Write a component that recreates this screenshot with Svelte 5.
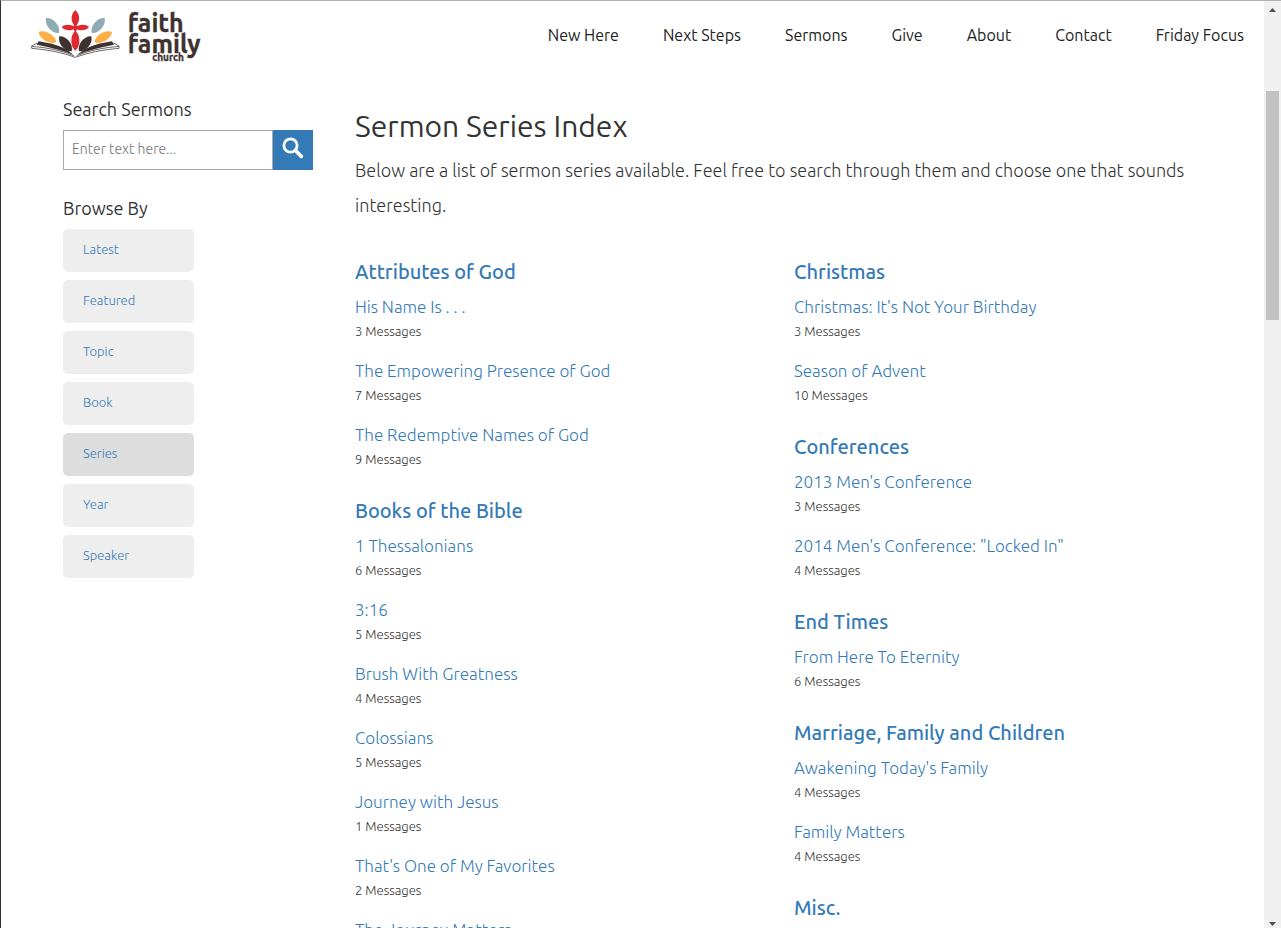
<script>
  const nav = ['New Here', 'Next Steps', 'Sermons', 'Give', 'About', 'Contact', 'Friday Focus'];
  const filters = ['Latest', 'Featured', 'Topic', 'Book', 'Series', 'Year', 'Speaker'];
  const current = 'Series';

  // A pointed petal between two tips; w is how far the sides bulge.
  function petal(x1, y1, x2, y2, w) {
    const dx = x2 - x1;
    const dy = y2 - y1;
    const len = Math.hypot(dx, dy);
    const nx = (-dy / len) * w;
    const ny = (dx / len) * w;
    const at = (t, s) => `${(x1 + dx * t + nx * s).toFixed(1)} ${(y1 + dy * t + ny * s).toFixed(1)}`;
    return `M${x1} ${y1} C${at(0.22, 1)} ${at(0.78, 1)} ${x2} ${y2} C${at(0.78, -1)} ${at(0.22, -1)} ${x1} ${y1}Z`;
  }

  const petals = [
    ['#8fabb3', petal(78, 54, 117, 99, 18)],
    ['#8fabb3', petal(254, 54, 215, 99, 18)],
    ['#fbaf46', petal(56, 96, 109, 127, 17)],
    ['#fbaf46', petal(276, 96, 223, 127, 17)],
    ['#3d3230', petal(118, 109, 155, 154, 18)],
    ['#3d3230', petal(214, 109, 177, 154, 18)],
    ['#e0282e', petal(166, 31, 166, 79, 15)],
    ['#e0282e', petal(166, 92, 166, 152, 16)],
    ['#e0282e', petal(125, 81, 166, 84, 11)],
    ['#e0282e', petal(207, 81, 166, 84, 11)]
  ];

  const columns = [
    [
      {
        title: 'Attributes of God',
        series: [['His Name Is . . .', 3], ['The Empowering Presence of God', 7], ['The Redemptive Names of God', 9]]
      },
      {
        title: 'Books of the Bible',
        series: [
          ['1 Thessalonians', 6],
          ['3:16', 5],
          ['Brush With Greatness', 4],
          ['Colossians', 5],
          ['Journey with Jesus', 1],
          ["That's One of My Favorites", 2],
          ['The Journey Matters']
        ]
      }
    ],
    [
      { title: 'Christmas', series: [["Christmas: It's Not Your Birthday", 3], ['Season of Advent', 10]] },
      { title: 'Conferences', series: [["2013 Men's Conference", 3], ['2014 Men\'s Conference: "Locked In"', 4]] },
      { title: 'End Times', series: [['From Here To Eternity', 6]] },
      { title: 'Marriage, Family and Children', series: [["Awakening Today's Family", 4], ['Family Matters', 4]] },
      { title: 'Misc.', series: [] }
    ]
  ];
</script>

<div class="window">
  <div class="page">
    <header>
      <a class="logo" href="#home" aria-label="Faith Family Church">
        <svg width="174" height="53" viewBox="30 30 522 159" aria-hidden="true">
          <g fill="#3d3230">
            <path d="M56 124 L96 131 Q136 142 160 164 Q118 147 50 134Z" />
            <path d="M276 124 L236 131 Q196 142 172 164 Q214 147 282 134Z" />
          </g>
          <path
            d="M52 129 L35 138 V145 Q110 151 166 172 Q222 151 297 145 V138 L280 129 M35 139 Q110 145 162 167 M297 139 Q222 145 170 167"
            fill="none"
            stroke="#3d3230"
            stroke-width="2.2"
          />
          {#each petals as [fill, d]}
            <path {fill} {d} />
          {/each}
          <path d="M166 68 L173 83 L166 100 L159 83Z" fill="#e0282e" />
          <g class="wordmark">
            <text x="323" y="97" font-size="75">faith</text>
            <text x="323" y="158" font-size="75">family</text>
            <text x="397" y="183" font-size="30">church</text>
          </g>
        </svg>
      </a>
      <nav aria-label="Main">
        {#each nav as item}
          <a href="#{item.toLowerCase().replace(' ', '-')}">{item}</a>
        {/each}
      </nav>
    </header>

    <div class="body">
      <aside>
        <form class="search" onsubmit={(e) => e.preventDefault()}>
          <label for="q">Search Sermons</label>
          <div class="field">
            <input id="q" type="text" placeholder="Enter text here..." />
            <button type="submit" aria-label="Search">
              <svg width="22" height="22" viewBox="0 0 22 22" fill="none" stroke="#fff" aria-hidden="true">
                <circle cx="8.5" cy="8.5" r="6.6" stroke-width="2.8" />
                <path d="M13.5 13.5 L19.3 19.3" stroke-width="3.8" stroke-linecap="round" />
              </svg>
            </button>
          </div>
        </form>
        <h2>Browse By</h2>
        <ul class="filters">
          {#each filters as f}
            <li><a href="#{f.toLowerCase()}" class:active={f === current}>{f}</a></li>
          {/each}
        </ul>
      </aside>

      <main>
        <h1>Sermon Series Index</h1>
        <p class="intro">
          Below are a list of sermon series available. Feel free to search through them and choose one that sounds
          interesting.
        </p>
        <div class="columns">
          {#each columns as groups}
            <div class="column">
              {#each groups as group}
                <section>
                  <h3>{group.title}</h3>
                  <ul>
                    {#each group.series as [name, count]}
                      <li>
                        <a href="#series">{name}</a>
                        {#if count}<span>{count} Messages</span>{/if}
                      </li>
                    {/each}
                  </ul>
                </section>
              {/each}
            </div>
          {/each}
        </div>
      </main>
    </div>
  </div>

  <div class="scrollbar" aria-hidden="true">
    <svg width="17" height="17" viewBox="0 0 17 17"><path d="M5 11 L8.5 7 L12 11Z" fill="#505050" /></svg>
    <div class="track">
      <div class="before"></div>
      <div class="thumb"></div>
      <div class="after"></div>
    </div>
    <svg width="17" height="17" viewBox="0 0 17 17"><path d="M5 11 L8.5 15 L12 11Z" fill="#505050" /></svg>
  </div>
</div>

<style>
  :global(body) {
    margin: 0;
    background: #fff;
  }

  .window {
    box-sizing: border-box;
    display: flex;
    height: 100vh;
    overflow: hidden;
    border-top: 1px solid #b0b0b0;
    border-left: 1px solid #333;
    color: #333;
    font-family: Ubuntu, 'Open Sans', sans-serif;
    font-weight: 300;
  }

  .page {
    flex: 1;
    min-width: 0;
    overflow: hidden;
  }

  a {
    color: #337ab7;
    text-decoration: none;
  }

  ul {
    list-style: none;
    margin: 0;
    padding: 0;
  }

  header {
    display: flex;
    justify-content: space-between;
    align-items: flex-start;
    padding: 9px 20px 0 29px;
  }

  .logo svg {
    display: block;
  }

  .wordmark {
    fill: #3d3230;
    stroke: #3d3230;
    stroke-width: 1;
    font-family: Ubuntu, 'Open Sans', sans-serif;
    font-weight: 700;
  }

  nav {
    display: flex;
    gap: 44px;
    padding-top: 13px;
  }

  nav a {
    color: #222;
    font-size: 16px;
    font-weight: 400;
    line-height: 24px;
  }

  .body {
    display: grid;
    grid-template-columns: 250px 1fr;
    gap: 42px;
    padding: 35px 31px 0 62px;
  }

  label,
  h2 {
    display: block;
    margin: 0;
    font-size: 18px;
    font-weight: 400;
    line-height: 24px;
  }

  label {
    line-height: 22px;
  }

  .field {
    display: flex;
    margin: 10px 0 26px;
  }

  input {
    box-sizing: border-box;
    flex: 1;
    min-width: 0;
    height: 40px;
    padding: 0 8px 2px;
    border: 1px solid #a9a9a9;
    border-radius: 0;
    background: #fff;
    color: #333;
    font: 300 14px Ubuntu, 'Open Sans', sans-serif;
  }

  input::placeholder {
    color: #757575;
  }

  button {
    display: grid;
    place-items: center;
    width: 40px;
    height: 40px;
    padding: 0 0 4px;
    border: 0;
    background: #337ab7;
  }

  .filters {
    display: grid;
    gap: 8px;
    width: 131px;
    margin-top: 9px;
  }

  .filters a {
    display: block;
    padding: 0 20px 2px;
    border-radius: 5px;
    background: #eee;
    font-size: 13px;
    line-height: 41px;
  }

  .filters a.active {
    background: #ddd;
  }

  h1 {
    margin: 8px 0 7px;
    font-size: 30px;
    font-weight: 400;
    line-height: 40px;
  }

  .intro {
    margin: 0 0 34px;
    font-size: 18px;
    line-height: 35px;
  }

  .columns {
    display: grid;
    grid-template-columns: 1fr 1fr;
  }

  .column {
    display: grid;
    align-content: start;
    gap: 25px;
  }

  h3 {
    margin: 0 0 8px;
    color: #337ab7;
    font-size: 20px;
    font-weight: 500;
    line-height: 30px;
  }

  section ul {
    display: grid;
    gap: 16px;
  }

  section a,
  section span {
    display: block;
    line-height: 24px;
  }

  section a {
    font-size: 17px;
  }

  section span {
    font-size: 13px;
  }

  .scrollbar {
    display: flex;
    flex-direction: column;
    width: 17px;
    background: #f0f0f0;
  }

  .scrollbar svg {
    display: block;
  }

  .track {
    display: flex;
    flex: 1;
    flex-direction: column;
    padding: 0 2px;
  }

  .before {
    flex: 73;
  }

  .thumb {
    flex: 229;
    background: #c1c1c1;
  }

  .after {
    flex: 591;
  }
</style>
